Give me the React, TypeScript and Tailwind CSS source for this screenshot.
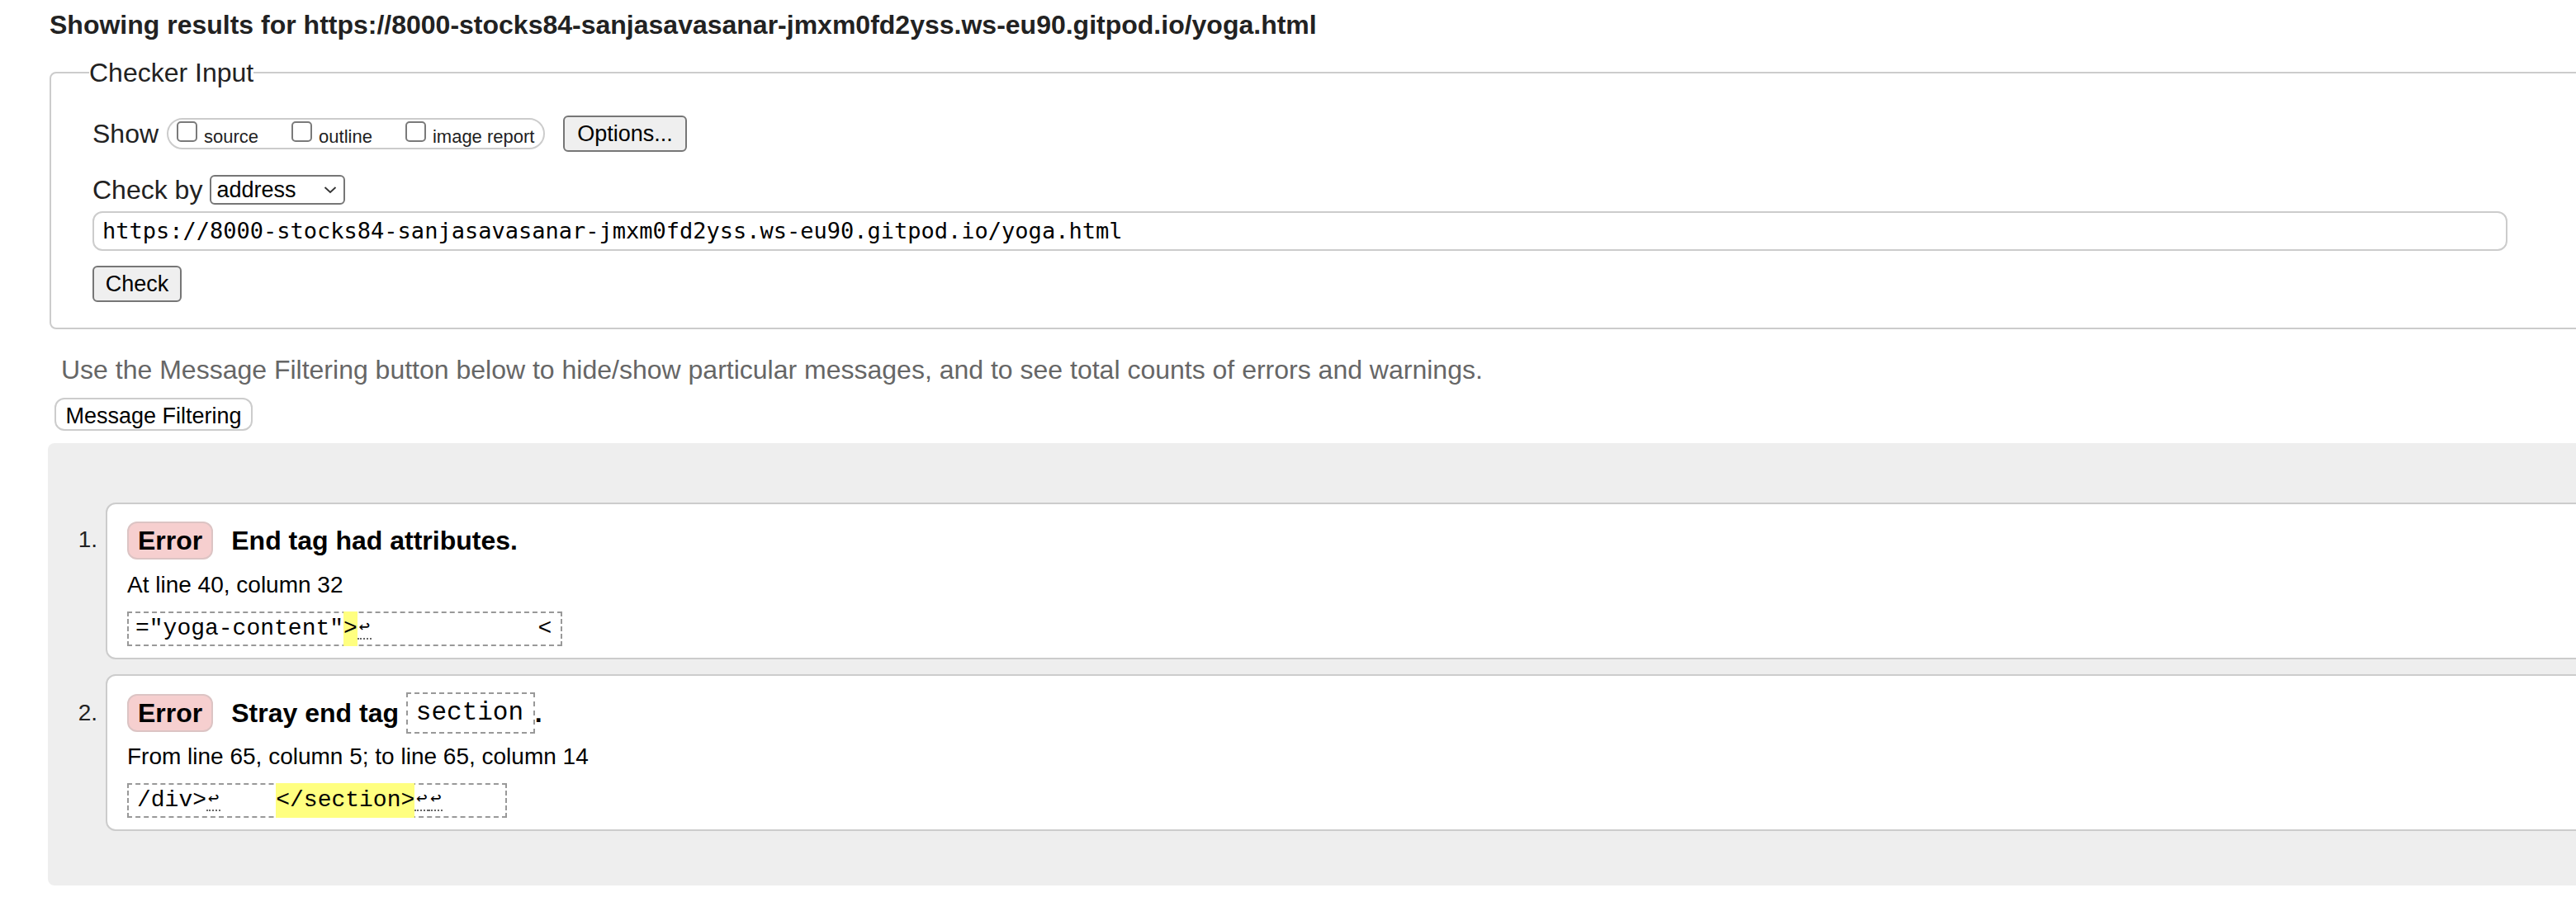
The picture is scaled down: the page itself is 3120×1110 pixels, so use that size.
import React from "react";

const URL = "https://8000-stocks84-sanjasavasanar-jmxm0fd2yss.ws-eu90.gitpod.io/yoga.html";

function Lf() {
  return (
    <span className="inline-block w-[17px] border-b-2 border-dotted border-[#666] text-center text-[22px] leading-[24px]">
      ↩
    </span>
  );
}

function Checkbox({ label }: { label: string }) {
  return (
    <label className="flex items-center gap-[8px]">
      <span className="mb-[6px] h-[25px] w-[25px] rounded-[5px] border-2 border-[#7a7a7a] bg-white" />
      <span className="mt-[8px] text-[22px] leading-[22px]">{label}</span>
    </label>
  );
}

function Badge() {
  return (
    <span className="flex h-[46px] items-center rounded-[12px] border-2 border-[#dcc4c4] bg-[#f6cfcf] px-[11px] text-[32px] font-bold text-black">
      Error
    </span>
  );
}

export default function App() {
  return (
    <div className="h-[1110px] w-[3120px] overflow-hidden bg-white font-['Liberation_Sans',Arial,sans-serif] text-[#222]">
      <h2 className="pl-[60px] pt-[12px] text-[32px] font-bold leading-[36px]">Showing results for {URL}</h2>

      <fieldset className="ml-[60px] mt-[22px] w-[3300px] rounded-[8px] border-2 border-[#ccc] pb-[31px] pl-[50px]">
        <legend className="-ml-[4px] text-[32px] leading-[36px]">Checker Input</legend>

        <div className="mt-[34px] flex h-[44px] items-center">
          <span className="text-[32px] leading-[36px]">Show</span>
          <div className="ml-[10px] flex h-[38px] w-[458px] items-center gap-[40px] rounded-full border-2 border-[#ccc] pl-[10px]">
            <Checkbox label="source" />
            <Checkbox label="outline" />
            <Checkbox label="image report" />
          </div>
          <button className="ml-[22px] h-[44px] w-[150px] rounded-[6px] border-2 border-[#767676] bg-[#efefef] text-[27px] text-black">
            Options...
          </button>
        </div>

        <div className="mt-[28px] flex h-[36px] items-center">
          <span className="text-[32px] leading-[36px]">Check by</span>
          <div className="ml-[9px] flex h-[36px] w-[164px] items-center justify-between rounded-[6px] border-2 border-[#767676] bg-white pl-[6px] pr-[8px] text-[27px] text-black">
            <span>address</span>
            <svg width="16" height="10" viewBox="0 0 16 10" fill="none">
              <path d="M1.5 2 L8 8 L14.5 2" stroke="#333" strokeWidth="1.8" />
            </svg>
          </div>
        </div>

        <div className="mt-[8px] flex h-[48px] w-[2925px] items-center rounded-[12px] border-2 border-[#ccc] pl-[10px] font-['DejaVu_Sans_Mono',monospace] text-[27px] text-black">
          {URL}
        </div>

        <button className="mt-[18px] h-[44px] w-[108px] rounded-[6px] border-2 border-[#767676] bg-[#efefef] text-[27px] text-black">
          Check
        </button>
      </fieldset>

      <p className="ml-[74px] mt-[31px] text-[32px] leading-[36px] text-[#666]">
        Use the Message Filtering button below to hide/show particular messages, and to see total counts of errors and warnings.
      </p>

      <button className="ml-[66px] mt-[16px] h-[40px] w-[240px] rounded-[12px] border-2 border-[#ccc] bg-white text-[27px] text-black">
        Message Filtering
      </button>

      <ol className="ml-[58px] mt-[15px] w-[3300px] rounded-[8px] bg-[#eee] pb-[66px] pt-[72px]">
        <li className="flex items-start">
          <span className="mt-[22px] w-[70px] pr-[10px] text-right text-[28px] leading-[46px]">1.</span>
          <div className="flex-1 rounded-[12px] border-2 border-[#ccc] bg-white pb-[14px] pl-[24px] pt-[20px]">
            <div className="flex items-center gap-[22px]">
              <Badge />
              <span className="text-[32px] font-bold text-black">End tag had attributes.</span>
            </div>
            <p className="mt-[14px] text-[28px] leading-[32px] text-black">At line 40, column 32</p>
            <div className="mt-[16px] inline-flex h-[42px] items-center whitespace-pre border-2 border-dashed border-[#999] pl-[8px] pr-[11px] font-['Liberation_Mono',monospace] text-[28px] text-black">
              <span>="yoga-content"</span>
              <mark className="bg-[#ffff80] text-black">&gt;</mark>
              <Lf />
              <span>{"            <"}</span>
            </div>
          </div>
        </li>

        <li className="mt-[18px] flex items-start">
          <span className="mt-[24px] w-[70px] pr-[10px] text-right text-[28px] leading-[46px]">2.</span>
          <div className="flex-1 rounded-[12px] border-2 border-[#ccc] bg-white pb-[14px] pl-[24px] pt-[20px]">
            <div className="flex items-center">
              <Badge />
              <span className="ml-[22px] whitespace-pre text-[32px] font-bold text-black">Stray end tag </span>
              <code className="flex h-[50px] w-[156px] items-center border-2 border-dashed border-[#999] pl-[10px] font-['Liberation_Mono',monospace] text-[31px] text-black">
                section
              </code>
              <span className="text-[32px] font-bold text-black">.</span>
            </div>
            <p className="mt-[12px] text-[28px] leading-[32px] text-black">From line 65, column 5; to line 65, column 14</p>
            <div className="mt-[16px] inline-flex h-[42px] items-center whitespace-pre border-2 border-dashed border-[#999] pl-[10px] pr-[76px] font-['Liberation_Mono',monospace] text-[28px] text-black">
              <span>/div&gt;</span>
              <Lf />
              <span>{"    "}</span>
              <mark className="bg-[#ffff80] text-black">&lt;/section&gt;</mark>
              <Lf />
              <Lf />
            </div>
          </div>
        </li>
      </ol>
    </div>
  );
}
